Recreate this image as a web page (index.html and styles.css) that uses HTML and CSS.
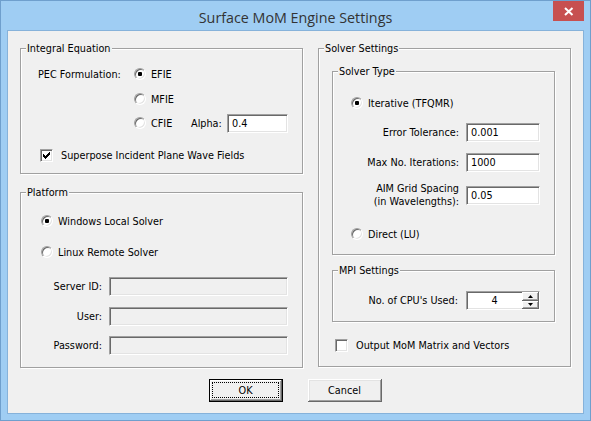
FILE: index.html
```html
<!DOCTYPE html>
<html>
<head>
<meta charset="utf-8">
<link rel="stylesheet" href="styles.css">
</head>
<body>
<div class="window">
  <div class="titlebar">
    <div class="title">Surface MoM Engine Settings</div>
    <div class="close"><svg width="31" height="20" viewBox="0 0 31 20"><path d="M12 7 L19.5 14 M19.5 7 L12 14" stroke="#fff" stroke-width="2" fill="none"/></svg></div>
  </div>
  <div class="client">
    <div class="columns">
      <div class="col-left">
        <div class="group g-integral">
          <span class="group-title">Integral Equation</span>
          <div class="row"><span class="pec-label">PEC Formulation:</span><span class="opt"><span class="radio on"></span>EFIE</span></div>
          <div class="row indent r2"><span class="opt"><span class="radio"></span>MFIE</span></div>
          <div class="row indent r3"><span class="opt cfie"><span class="radio"></span>CFIE</span><span class="alpha-label">Alpha:</span><span class="edit w-alpha">0.4</span></div>
          <div class="row chk-row r4"><span class="check"><svg width="13" height="13" viewBox="0 0 13 13"><path d="M3 5 H4 V6 H5 V7 H6 V6 H7 V5 H8 V4 H9 V3 H10 V6 H9 V7 H8 V8 H7 V9 H6 V10 H5 V9 H4 V8 H3 Z" fill="#000"/></svg></span>Superpose Incident Plane Wave Fields</div>
        </div>
        <div class="group g-platform">
          <span class="group-title">Platform</span>
          <div class="row prow"><span class="opt"><span class="radio on"></span>Windows Local Solver</span></div>
          <div class="row prow p2"><span class="opt"><span class="radio"></span>Linux Remote Solver</span></div>
          <div class="frow-l f1"><span class="field-label">Server ID:</span><span class="edit disabled w-wide"></span></div>
          <div class="frow-l f2"><span class="field-label">User:</span><span class="edit disabled w-wide"></span></div>
          <div class="frow-l f3"><span class="field-label">Password:</span><span class="edit disabled w-wide"></span></div>
        </div>
      </div>
      <div class="col-right">
        <div class="group g-solver">
          <span class="group-title">Solver Settings</span>
          <div class="group g-type">
            <span class="group-title">Solver Type</span>
            <div class="row"><span class="opt"><span class="radio on"></span>Iterative (TFQMR)</span></div>
            <div class="frow s1"><span>Error Tolerance:</span><span class="edit w-num">0.001</span></div>
            <div class="frow s2"><span>Max No. Iterations:</span><span class="edit w-num">1000</span></div>
            <div class="frow aim"><span class="two-line">AIM Grid Spacing<br>(in Wavelengths):</span><span class="edit w-num">0.05</span></div>
            <div class="row s4"><span class="opt"><span class="radio"></span>Direct (LU)</span></div>
          </div>
          <div class="group g-mpi">
            <span class="group-title">MPI Settings</span>
            <div class="frow mpi-row"><span>No. of CPU's Used:</span><span class="edit spin"><span class="spin-val">4</span><span class="spin-btns"><span class="spin-btn"><svg width="5" height="3" viewBox="0 0 5 3"><path d="M2.5 0 L5 3 L0 3 Z" fill="#000"/></svg></span><span class="spin-btn"><svg width="5" height="3" viewBox="0 0 5 3"><path d="M0 0 L5 0 L2.5 3 Z" fill="#000"/></svg></span></span></span></div>
          </div>
          <div class="row out-row"><span class="check"></span>Output MoM Matrix and Vectors</div>
        </div>
      </div>
    </div>
    <div class="buttons">
      <div class="btn default"><span class="focus">OK</span></div>
      <div class="btn"><span class="nofocus">Cancel</span></div>
    </div>
  </div>
</div>
</body>
</html>
```
FILE: styles.css
```css
* { box-sizing: border-box; }
html, body { margin: 0; padding: 0; }
body {
  width: 591px; height: 421px; overflow: hidden;
  font-family: "DejaVu Sans", "Liberation Sans", sans-serif;
  font-size: 9.7px; color: #000;
}
.window {
  width: 591px; height: 421px;
  background: #9fcdf3;
  border: 1px solid #6f9fcd;
  padding: 0 6px 6px;
  display: flex; flex-direction: column;
}
.titlebar {
  height: 29px;
  display: grid;
  grid-template-columns: 31px 1fr 31px;
}
.title {
  grid-column: 2;
  text-align: center;
  font-family: "Open Sans", sans-serif;
  font-size: 14.3px;
  color: #333;
  line-height: 29px;
  padding-top: 2px;
}
.close {
  grid-column: 3;
  height: 20px;
  background: #c75050;
  display: flex;
}
.client {
  height: 384px;
  background: #f0f0f0;
  border: 1px solid #86b2da;
  padding: 17px 12px 0;
}
.columns { display: flex; gap: 15px; }
.col-left { width: 283px; display: flex; flex-direction: column; }
.col-right { width: 253px; }

.group {
  position: relative;
  border: 1px solid #a0a0a0;
  box-shadow: inset 1px 1px 0 #fff, 1px 1px 0 #fff;
}
.group-title {
  position: absolute;
  top: -7px; left: 5px;
  padding: 0 1px;
  background: #f0f0f0;
  line-height: 13px;
  white-space: nowrap;
}

.row { display: flex; align-items: center; height: 20px; }
.opt { display: flex; align-items: center; white-space: nowrap; }
.radio {
  width: 12px; height: 12px;
  margin-right: 5px;
  border-radius: 50%;
  background: #fff;
  border: 1px solid;
  border-color: #a0a0a0 #fff #fff #a0a0a0;
  box-shadow: inset 1px 1px 0 #696969, inset -1px -1px 0 #e3e3e3;
  display: flex; align-items: center; justify-content: center;
}
.radio.on::after {
  content: "";
  width: 4px; height: 4px;
  border-radius: 1px;
  background: #000;
}
.check {
  width: 13px; height: 13px;
  background: #fff;
  border: 1px solid;
  border-color: #a0a0a0 #fff #fff #a0a0a0;
  box-shadow: inset 1px 1px 0 #696969, inset -1px -1px 0 #e3e3e3;
  display: block;
}
.check svg { display: block; margin: -1px; }

.edit {
  display: flex; align-items: center;
  height: 19px;
  background: #fff;
  border: 1px solid;
  border-color: #a0a0a0 #fff #fff #a0a0a0;
  box-shadow: inset 1px 1px 0 #696969, inset -1px -1px 0 #e3e3e3;
  padding-left: 4px;
}
.edit.disabled { background: #f0f0f0; }
.w-alpha { width: 61px; }
.w-wide { width: 179px; }
.w-num { width: 74px; }

/* Integral */
.g-integral { height: 126px; padding: 15px 0 0 17px; }
.pec-label { width: 96px; }
.indent { padding-left: 96px; }
.r2 { margin-top: 5px; }
.r3 { margin-top: 4px; }
.cfie { width: 57px; }
.alpha-label { width: 36px; }
.r4 { margin-top: 12px; padding-left: 2px; }
.r4 .check { margin-right: 8px; }

/* Platform */
.g-platform { height: 176px; margin-top: 18px; padding: 18px 0 0 0; }
.prow { padding-left: 20px; }
.p2 { margin-top: 11px; }
.frow-l { display: flex; align-items: center; height: 19px; }
.field-label { width: 81px; text-align: right; margin-right: 7px; }
.f1 { margin-top: 15px; }
.f2 { margin-top: 11px; }
.f3 { margin-top: 10px; }

/* Solver */
.g-solver { height: 319px; padding: 22px 0 0 13px; }
.g-type { width: 223px; height: 184px; padding: 21px 14px 0 18px; }
.frow { display: flex; justify-content: flex-end; align-items: center; height: 19px; gap: 7px; }
.s1 { margin-top: 10px; }
.s2 { margin-top: 11px; }
.aim { height: 26px; margin-top: 10px; }
.two-line { line-height: 13px; text-align: right; }
.s4 { margin-top: 16px; }
.g-mpi { width: 223px; height: 52px; margin-top: 15px; padding: 20px 14px 0 0; }
.mpi-row { gap: 8px; }
.spin { width: 74px; padding: 0; }
.spin-val { flex: 1; text-align: center; }
.spin-btns { width: 17px; height: 17px; display: flex; flex-direction: column; }
.spin-btn {
  flex: 1;
  background: #f0f0f0;
  box-shadow: inset -1px -1px 0 #696969, inset 1px 1px 0 #fff, inset -2px -2px 0 #a0a0a0;
  display: flex; align-items: center; justify-content: center;
}
.spin-btn svg { display: block; }
.out-row { margin-top: 13px; padding-left: 3px; }
.out-row .check { margin-right: 8px; }

/* Buttons */
.buttons { display: flex; justify-content: center; gap: 25px; margin-top: 11px; }
.btn {
  width: 74px; height: 23px;
  background: #f0f0f0;
  display: flex;
  box-shadow: inset -1px -1px 0 #696969, inset 1px 1px 0 #fff, inset -2px -2px 0 #a0a0a0, inset 2px 2px 0 #e3e3e3;
}
.btn.default {
  border: 1px solid #000;
  box-shadow: inset -1px -1px 0 #696969, inset 1px 1px 0 #fff, inset -2px -2px 0 #a0a0a0;
}
.focus, .nofocus {
  flex: 1;
  display: flex; align-items: center; justify-content: center;
  margin: 2px 3px 3px 2px;
  border: 1px dotted transparent;
}
.focus { border-color: #000; }
```
